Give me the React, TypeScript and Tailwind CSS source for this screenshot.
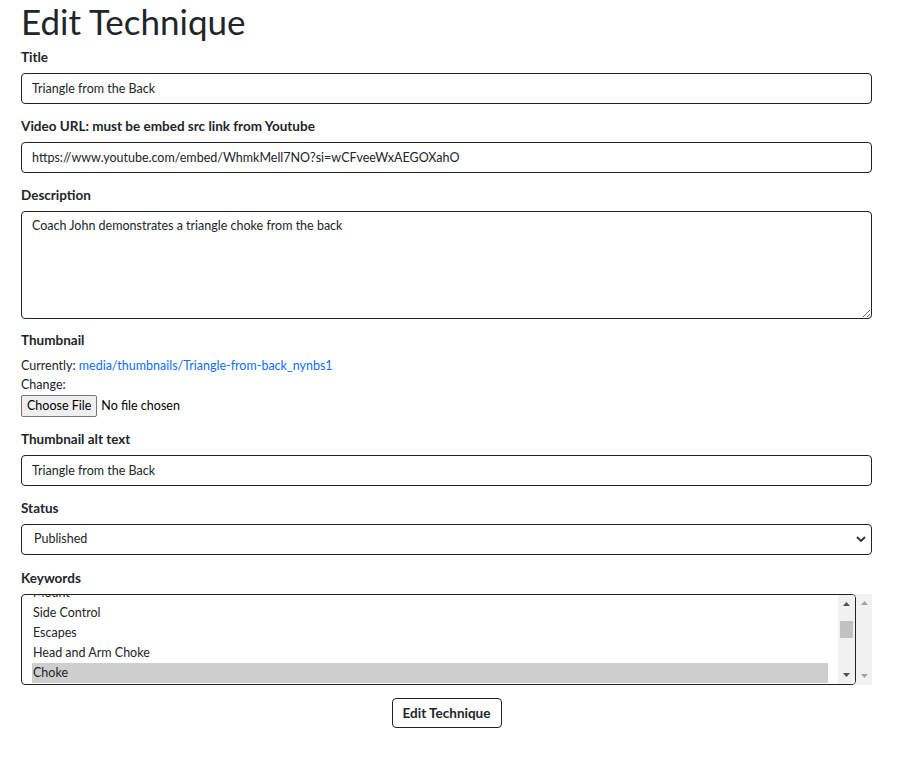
import React from 'react';

const font = { fontFamily: 'Lato, "Noto Sans", sans-serif' };

function Label({ children }: { children: React.ReactNode }) {
  return <div className="text-[13.5px] font-bold leading-[20px] mb-[6px] text-[#212529]">{children}</div>;
}

function TextInput({ value }: { value: string }) {
  return (
    <input
      defaultValue={value}
      className="block w-full h-[31px] border border-[#222] rounded-[4px] px-[10px] pb-[1px] text-[12.5px] text-[#212529] mb-[12px]"
    />
  );
}

function Arrow({ up, color }: { up?: boolean; color: string }) {
  return (
    <svg width="7" height="4" viewBox="0 0 7 4" className="block">
      {up ? <path d="M0 4 L3.5 0 L7 4 Z" fill={color} /> : <path d="M0 0 L3.5 4 L7 0 Z" fill={color} />}
    </svg>
  );
}

export default function App() {
  const keywords = ['Mount', 'Side Control', 'Escapes', 'Head and Arm Choke', 'Choke'];
  return (
    <div className="bg-white min-h-[773px] px-[21px] text-[#212529]" style={font}>
      <div className="w-[851px]">
        <h1 className="text-[35px] leading-[42px] font-normal mb-[5px]">Edit Technique</h1>

        <Label>Title</Label>
        <TextInput value="Triangle from the Back" />

        <Label>Video URL: must be embed src link from Youtube</Label>
        <TextInput value="https://www.youtube.com/embed/WhmkMell7NO?si=wCFveeWxAEGOXahO" />

        <Label>Description</Label>
        <textarea
          defaultValue="Coach John demonstrates a triangle choke from the back"
          className="block w-full h-[108px] border border-[#222] rounded-[4px] px-[10px] py-[4px] text-[12.5px] leading-[20px] mb-[11px]"
        />

        <Label>Thumbnail</Label>
        <div className="text-[12.5px] leading-[19px]">
          Currently: <a href="#" className="text-[#0d6efd]">media/thumbnails/Triangle-from-back_nynbs1</a>
        </div>
        <div className="text-[12.5px] leading-[19px] mb-[1px]">Change:</div>
        <div className="flex items-center mb-[12px]">
          <button className="h-[22px] px-[5px] bg-[#efefef] border border-[#767676] rounded-[2px] text-[12.5px] leading-[18px] text-black">
            Choose File
          </button>
          <span className="text-[12.5px] ml-[4px] text-black">No file chosen</span>
        </div>

        <Label>Thumbnail alt text</Label>
        <TextInput value="Triangle from the Back" />

        <Label>Status</Label>
        <div className="relative h-[31px] border border-[#222] rounded-[4px] mb-[13px] flex items-center px-[12px] pb-[1px] text-[12.5px]">
          <span>Published</span>
          <svg width="10" height="7" viewBox="0 0 10 7" className="absolute right-[5px] top-[11px]">
            <path d="M1 1 L5 5 L9 1" stroke="#333" strokeWidth="1.8" fill="none" />
          </svg>
        </div>

        <Label>Keywords</Label>
        <div className="flex h-[91px]">
          <div className="flex-1 flex border border-[#222] rounded-[4px] overflow-hidden">
            <div className="flex-1 overflow-hidden pl-[10px] pr-[10px]">
              <div className="-mt-[12px]">
                {keywords.map((k) => (
                  <div
                    key={k}
                    className={`h-[20px] leading-[20px] text-[12.5px] px-[1px] ${k === 'Choke' ? 'bg-[#cecece]' : ''}`}
                  >
                    {k}
                  </div>
                ))}
              </div>
            </div>
            <div className="w-[17px] bg-[#f1f1f1] flex flex-col items-center justify-between py-[7px]">
              <Arrow up color="#505050" />
              <div className="flex-1 w-full px-[2px] pt-[15px]">
                <div className="h-[17px] bg-[#c1c1c1]" />
              </div>
              <Arrow color="#505050" />
            </div>
          </div>
          <div className="w-[16px] bg-[#f1f1f1] flex flex-col items-center justify-between py-[7px]">
            <Arrow up color="#a3a3a3" />
            <Arrow color="#a3a3a3" />
          </div>
        </div>

        <div className="flex justify-center mt-[13px]">
          <button className="h-[30px] w-[110px] border border-[#222] rounded-[4px] text-[13.5px] font-bold bg-white">
            Edit Technique
          </button>
        </div>
      </div>
    </div>
  );
}
